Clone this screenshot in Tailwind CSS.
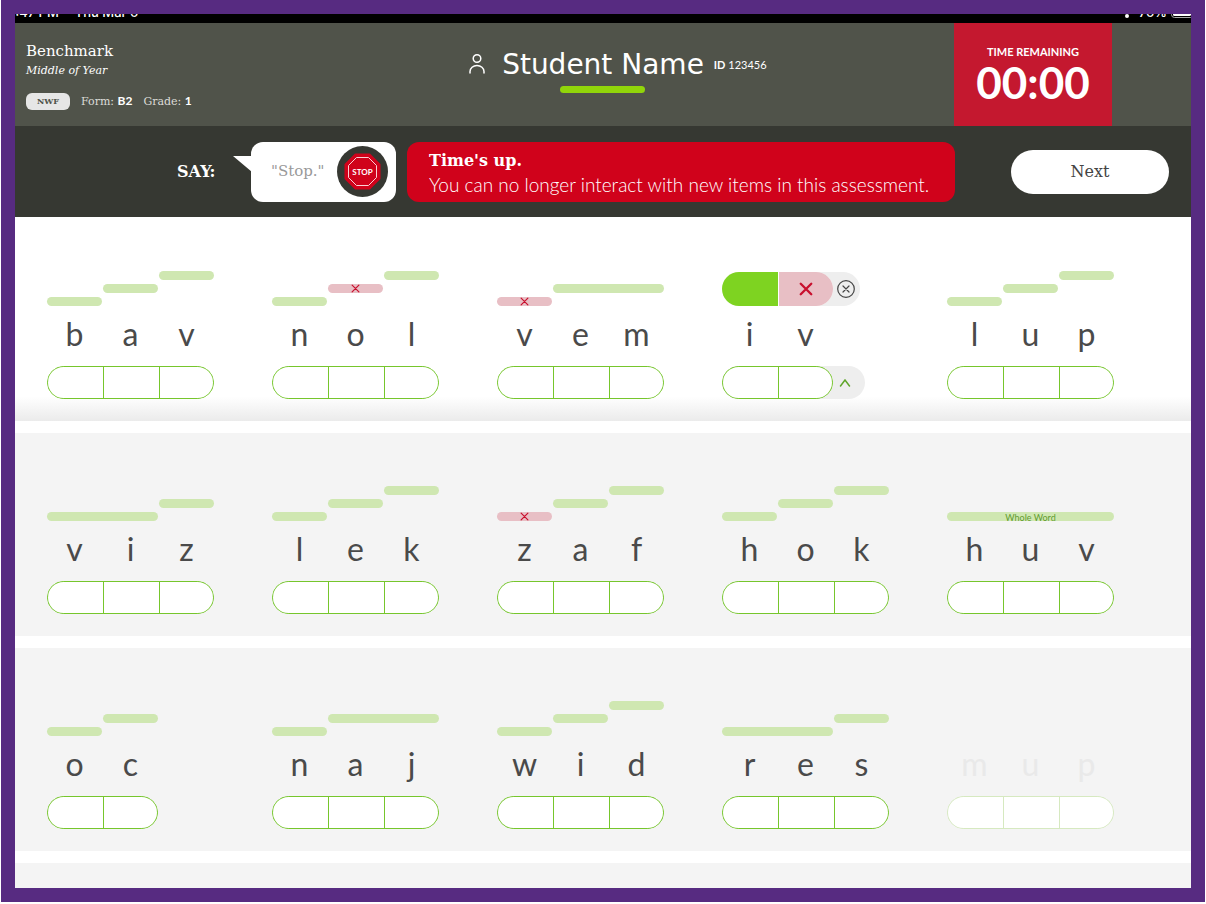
<!DOCTYPE html>
<html lang="en">
<head>
  <meta charset="UTF-8">
  <meta name="viewport" content="width=device-width, initial-scale=1.0">
  <title>Benchmark Assessment - NWF</title>
  <script src="https://cdn.jsdelivr.net/npm/@tailwindcss/browser@4"></script>
</head>
<body class="bg-white font-['Lato',sans-serif]">
  <div class="mx-px flex h-[calc(100vh-2px)] flex-col overflow-hidden border-14 border-[#572b81]">

    <!-- Device status bar -->
    <div class="flex h-[9px] shrink-0 justify-between overflow-hidden bg-black font-['Inter',sans-serif] text-[13px] leading-none font-medium text-white">
      <div class="-mt-2 -ml-2 flex gap-4"><span>9:47 PM</span><span>Thu Mar 6</span></div>
      <div class="-mt-2 flex gap-1">
        <svg class="h-3 w-4" viewBox="0 0 16 12" fill="none" stroke="#fff" stroke-width="2" aria-hidden="true"><path d="M1 4a10 10 0 0 1 14 0M4 7a6 6 0 0 1 8 0"/><circle cx="8" cy="10" r="1" fill="#fff"/></svg>
        <span>76%</span>
        <svg class="h-3 w-5" viewBox="0 0 20 12" aria-hidden="true"><rect x=".5" y=".5" width="22" height="11" rx="3" fill="none" stroke="#aaa"/><rect x="2" y="2" width="18" height="8" rx="1.500" fill="#fff"/></svg>
      </div>
    </div>

    <!-- Header -->
    <header class="grid h-[103px] shrink-0 grid-cols-[1fr_auto_1fr] bg-[#50534a] text-white">
      <div class="flex justify-between pl-[11px]">
        <div class="pt-[18px] font-['DejaVu_Serif',serif]">
          <h1 class="text-[15px] leading-5">Benchmark</h1>
          <p class="text-[11px] leading-5 italic">Middle of Year</p>
          <div class="mt-3 flex items-center gap-[11px] text-[11px] leading-[17px] text-[#dcdcd8]">
            <span class="w-11 rounded-md bg-[#e6e6e6] text-center text-[8px] font-bold text-[#50534a]">NWF</span>
            <span>Form: <b class="font-['Lato',sans-serif] text-xs text-white">B2</b></span>
            <span>Grade: <b class="font-['Lato',sans-serif] text-xs text-white">1</b></span>
          </div>
        </div>
        <svg class="mt-[30px] mr-4 h-[22px] w-[18px]" viewBox="0 0 18 22" fill="none" stroke="#fff" stroke-width="1.500" stroke-linecap="round" aria-hidden="true"><circle cx="9" cy="5.500" r="3.800"/><path d="M2 20v-1.500a7 6 0 0 1 14 0V20"/></svg>
      </div>
      <div class="flex flex-col items-center pt-6">
        <h2 class="font-['DejaVu_Sans',sans-serif] text-[28px] leading-9">Student Name</h2>
        <span class="mt-[3px] h-[7px] w-[85px] rounded-full bg-[#91d50a]"></span>
      </div>
      <div class="flex justify-between pl-[10px]">
        <p class="pt-[34px] text-[11px] leading-4"><b>ID</b> 123456</p>
        <div class="mr-[79px] w-[158px] bg-[#c4182f] pt-[21px] text-center">
          <p class="text-[11px] leading-4 font-bold">TIME REMAINING</p>
          <p class="text-[44px] leading-[44px] font-bold" role="timer">00:00</p>
        </div>
      </div>
    </header>

    <!-- Prompt -->
    <section class="flex h-[91px] shrink-0 items-center bg-[#363832] pr-[22px] pl-[162px] font-['DejaVu_Serif',serif]">
      <span class="w-[74px] text-base font-bold text-white">SAY:</span>
      <div class="relative flex h-[60px] w-[145px] items-center justify-between rounded-xl bg-white pr-2 pl-5">
        <svg class="absolute top-[14px] -left-[18px] h-4 w-[19px]" viewBox="0 0 19 16" fill="#fff" aria-hidden="true"><path d="M0 0h19v16z"/></svg>
        <span class="text-[15px] text-[#999]">"Stop."</span>
        <svg class="size-[51px]" viewBox="0 0 51 51" role="img" aria-label="Stop">
          <circle cx="25.500" cy="25.500" r="25.500" fill="#363832"/>
          <path d="M18.500 8.500h14l10 10v14l-10 10h-14l-10-10v-14z" fill="#d0021b" stroke="#d0021b" stroke-width="2" stroke-linejoin="round"/>
          <path d="M19.500 11.500h12l8 8v12l-8 8h-12l-8-8v-12z" fill="none" stroke="#fbd0d4"/>
          <text x="25.500" y="29" text-anchor="middle" font-family="Lato, sans-serif" font-size="8" font-weight="700" fill="#fff">STOP</text>
        </svg>
      </div>
      <div class="ml-[11px] h-[60px] w-[548px] rounded-xl bg-[#d0021b] pt-[7px] pl-[22px] text-white" role="alert">
        <p class="text-base leading-6 font-bold">Time's up.</p>
        <p class="font-['Lato',sans-serif] text-[19px] leading-6 font-light">You can no longer interact with new items in this assessment.</p>
      </div>
      <button type="button" class="ml-auto h-11 w-[158px] rounded-full bg-white text-base text-[#444]">Next</button>
    </section>

    <!-- Word rows are filled in from the list below -->
    <main id="rows" class="flex grow flex-col gap-3 bg-white"></main>
  </div>

  <script>
    // bars: one entry per marked sound group, n = letters covered, x = marked wrong
    var words = [
      [
        { w: 'bav', bars: [{ n: 1 }, { n: 1 }, { n: 1 }] },
        { w: 'nol', bars: [{ n: 1 }, { n: 1, x: true }, { n: 1 }] },
        { w: 'vem', bars: [{ n: 1, x: true }, { n: 2 }] },
        { w: 'iv', bars: [], active: true },
        { w: 'lup', bars: [{ n: 1 }, { n: 1 }, { n: 1 }] }
      ],
      [
        { w: 'viz', bars: [{ n: 2 }, { n: 1 }] },
        { w: 'lek', bars: [{ n: 1 }, { n: 1 }, { n: 1 }] },
        { w: 'zaf', bars: [{ n: 1, x: true }, { n: 1 }, { n: 1 }] },
        { w: 'hok', bars: [{ n: 1 }, { n: 1 }, { n: 1 }] },
        { w: 'huv', bars: [{ n: 3, label: 'Whole Word' }] }
      ],
      [
        { w: 'oc', bars: [{ n: 1 }, { n: 1 }] },
        { w: 'naj', bars: [{ n: 1 }, { n: 2 }] },
        { w: 'wid', bars: [{ n: 1 }, { n: 1 }, { n: 1 }] },
        { w: 'res', bars: [{ n: 2 }, { n: 1 }] },
        { w: 'mup', bars: [], off: true }
      ]
    ];
    var levels = ['row-start-3', 'row-start-2', 'row-start-1'];
    var spans = { 1: 'col-span-1', 2: 'col-span-2', 3: 'col-span-3' };
    var starts = ['col-start-1', 'col-start-2', 'col-start-3'];

    function cross(cls, width) {
      return `<svg class="${cls}" viewBox="0 0 12 12" fill="none" stroke="#c8102e" stroke-width="${width}" stroke-linecap="round" aria-hidden="true"><path d="M1.500 1.500l9 9M10.500 1.500l-9 9"/></svg>`;
    }

    function barsHtml(word) {
      if (word.active) {
        return `<div class="flex h-[35px] items-center">
          <div class="flex h-[34px] w-[138px] items-center rounded-full bg-[#eeeeee]">
            <div class="flex h-full w-[111px] gap-px overflow-hidden rounded-full bg-white">
              <button type="button" aria-label="i correct" class="w-14 bg-[#7ed321]"></button>
              <button type="button" aria-label="v incorrect" class="flex grow items-center justify-center bg-[#e8bfc5]">${cross('size-[14px]', 2)}</button>
            </div>
            <button type="button" aria-label="Clear" class="ml-1">
              <svg class="size-[18px]" viewBox="0 0 18 18" fill="none" stroke="#444" stroke-linecap="round"><circle cx="9" cy="9" r="8.300" stroke-width="1.200"/><path d="M6 6l6 6M12 6l-6 6" stroke-width="1.200"/></svg>
            </button>
          </div>
        </div>`;
      }
      var col = 0;
      var bars = word.bars.map(function (bar, i) {
        var html = `<div class="${levels[i]} ${starts[col]} ${spans[bar.n]} ${bar.x ? 'bg-[#e8bfc5]' : 'bg-[#cfe7b1]'} flex items-center justify-center rounded-full">
          ${bar.x ? cross('size-[9px]', 1.6) : ''}${bar.label ? `<span class="pt-[2px] text-[9px] leading-[9px] text-[#5f9b2e]">${bar.label}</span>` : ''}</div>`;
        col += bar.n;
        return html;
      }).join('');
      return `<div class="grid grid-cols-[repeat(3,55px)] grid-rows-[repeat(3,9px)] gap-x-px gap-y-1">${bars}</div>`;
    }

    function wordHtml(word) {
      var letters = word.w.split('');
      // the dividers are the pill's own colour showing through the gaps
      var pill = `<div class="${letters.length == 3 ? 'w-[167px]' : 'w-[111px]'} ${word.off ? 'border-[#d6e9c0] bg-[#d6e9c0]' : 'border-[#76c62c] bg-[#76c62c]'} flex h-[33px] gap-px overflow-hidden rounded-full border">
        ${letters.map((l, i) => `<button type="button" aria-label="${l}" class="${i < letters.length - 1 ? 'w-[55px]' : 'grow'} bg-white"></button>`).join('')}</div>`;
      if (word.active) {
        pill = `<div class="flex w-[143px] rounded-full bg-[#eeeeee]">${pill}
          <button type="button" aria-label="Expand" class="flex w-6 items-center justify-center">
            <svg class="h-2 w-3" viewBox="0 0 12 8" fill="none" stroke="#5fa52a" stroke-width="1.500" stroke-linecap="round"><path d="M1.500 7L6 1l4.500 6"/></svg>
          </button></div>`;
      }
      return `<div>
        ${barsHtml(word)}
        <div class="${word.off ? 'text-[#e9e9e9]' : 'text-[#4a4a4a]'} mt-2 grid grid-cols-[repeat(3,55px)] gap-x-px text-center text-[32px] leading-10">
          ${letters.map(l => `<span>${l}</span>`).join('')}
        </div>
        <div class="mt-3">${pill}</div>
      </div>`;
    }

    document.getElementById('rows').innerHTML = words.map(function (row, i) {
      return `<section class="${i == 0 ? 'bg-linear-to-b from-white from-88% to-[#ebebeb] pt-[54px]' : 'bg-[#f4f4f4] pt-[53px]'} grid shrink-0 grid-cols-5 pr-[19px] pb-[22px] pl-8">${row.map(wordHtml).join('')}</section>`;
    }).join('') + '<section class="grow bg-[#f4f4f4]"></section>';
  </script>
</body>
</html>
